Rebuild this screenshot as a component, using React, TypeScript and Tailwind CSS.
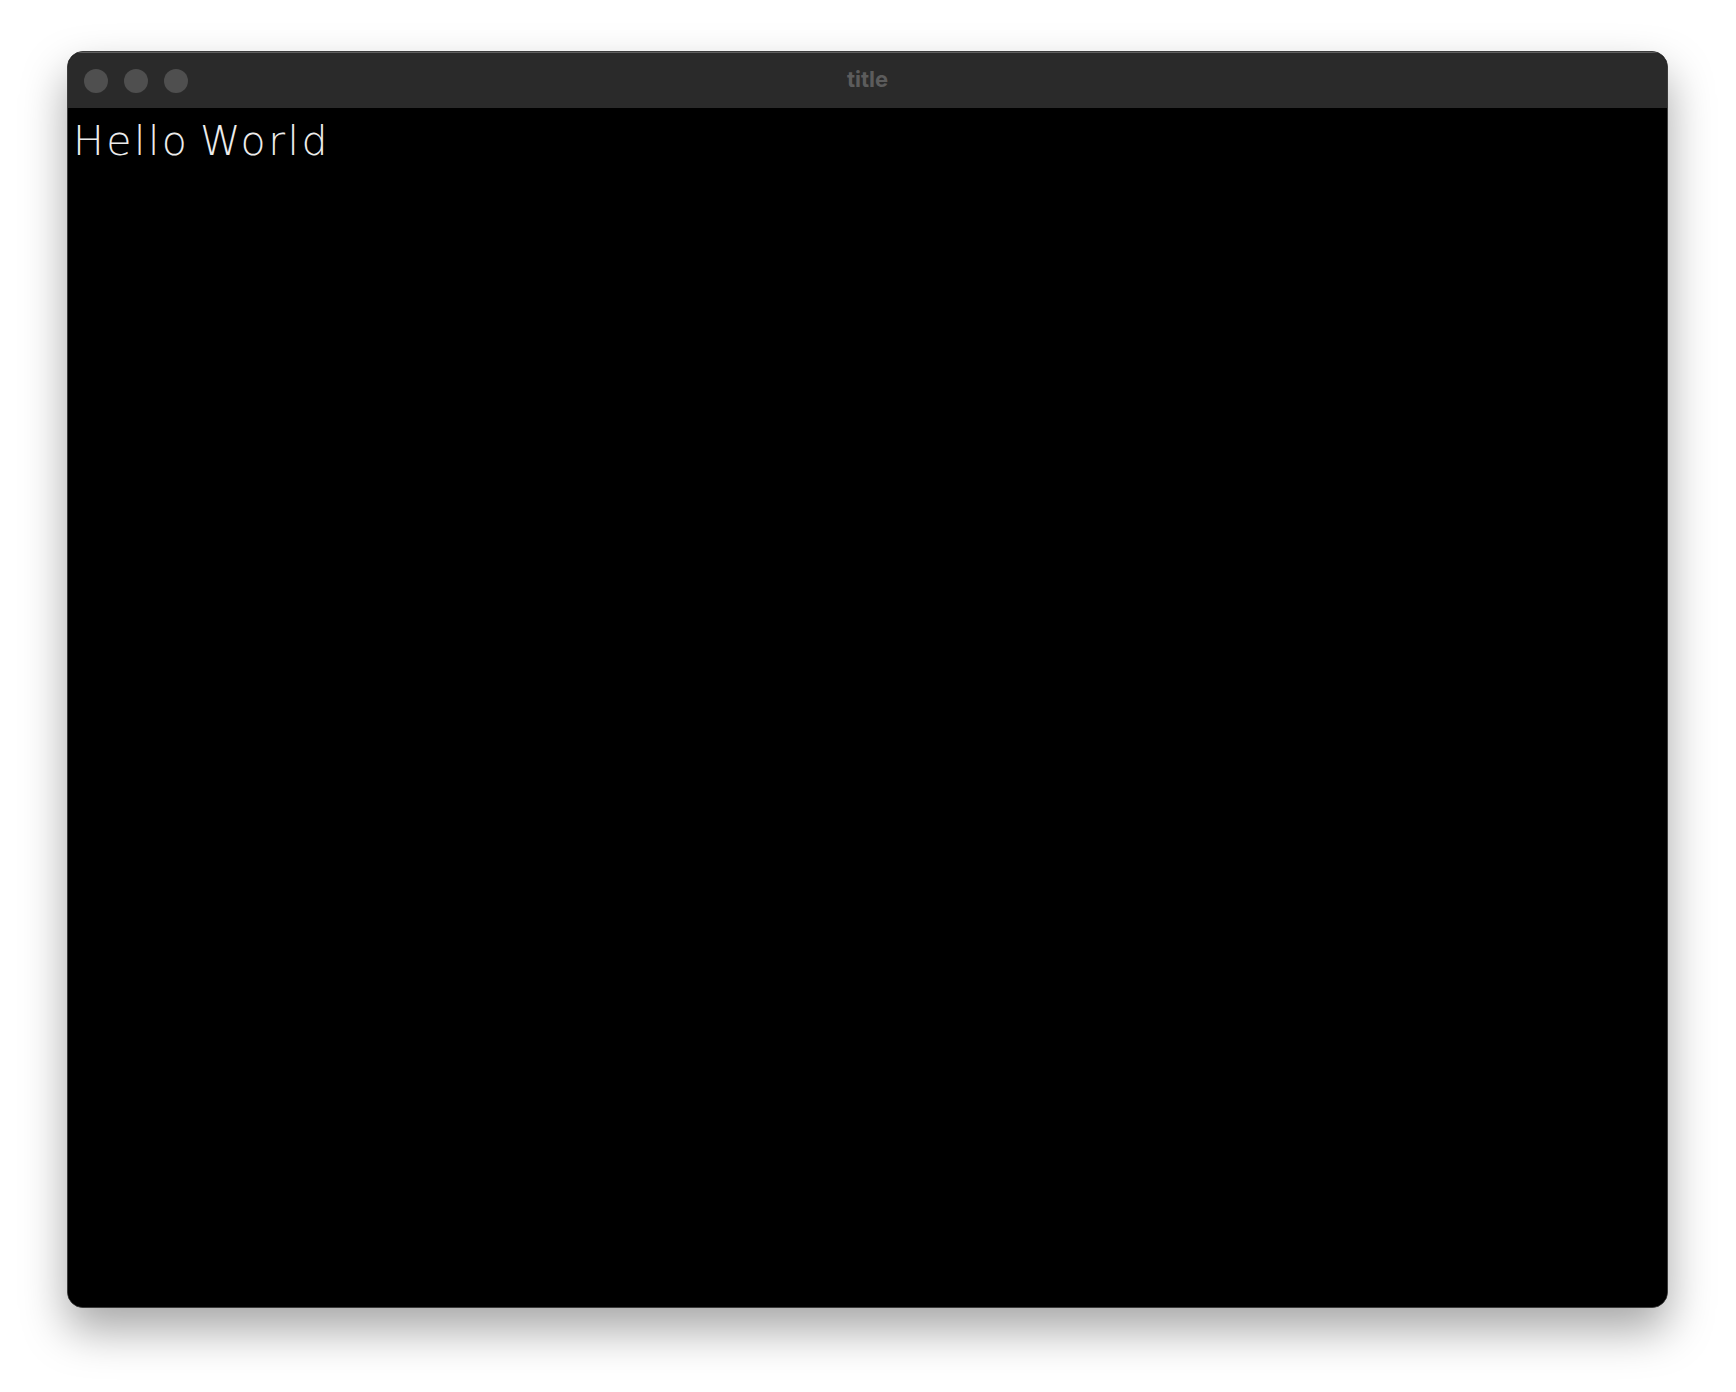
import React from "react";

export default function App() {
  return (
    <div className="w-[1736px] h-[1392px] bg-white pl-[67px] pt-[51px]">
      <div className="w-[1601px] h-[1257px] rounded-[16px] border border-[#3c3c3c] bg-black overflow-hidden flex flex-col shadow-[0_22px_45px_rgba(0,0,0,0.35)]">
        <div className="h-[56px] shrink-0 bg-[#2a2a2a] border-t border-[#606060] relative flex items-center">
          <div className="flex items-center gap-[16px] pl-[16px]">
            <div className="w-[24px] h-[24px] rounded-full bg-[#4f4f4f]" />
            <div className="w-[24px] h-[24px] rounded-full bg-[#4f4f4f]" />
            <div className="w-[24px] h-[24px] rounded-full bg-[#4f4f4f]" />
          </div>
          <div className="absolute inset-0 flex items-center justify-center pb-[2px] text-[22px] font-bold text-[#5c5c5c]" style={{ fontFamily: '"Inter", "Liberation Sans", sans-serif' }}>
            title
          </div>
        </div>
        <div className="flex-1 bg-black px-[5px] pt-[4px]">
          <div className="text-[41px] leading-[58px] text-[#ececec] tracking-[2.5px] [word-spacing:-5px] font-light" style={{ fontFamily: '"DejaVu Sans", sans-serif' }}>
            Hello World
          </div>
        </div>
      </div>
    </div>
  );
}
